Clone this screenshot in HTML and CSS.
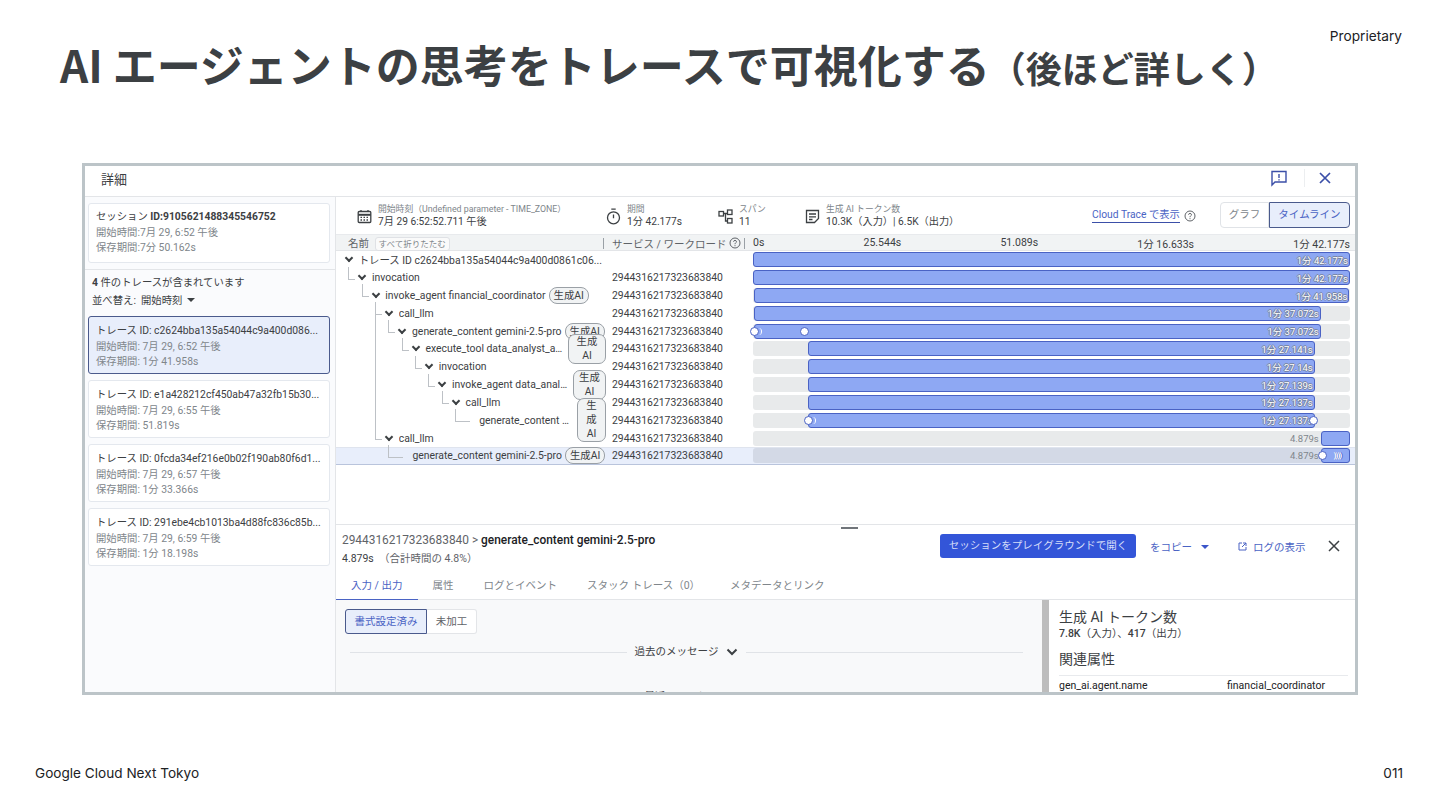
FILE: index.html
```html
<!DOCTYPE html>
<html lang="ja">
<head>
    <meta charset="UTF-8">
    <meta name="viewport" content="width=device-width, initial-scale=1">
    <title>AI エージェントの思考をトレースで可視化する</title>

    <link rel="stylesheet" href="styles.css">

</head>
<body>
    <div class="slide">
        <header class="slide-head">
            <h1>AI エージェントの思考をトレースで可視化する<small>（後ほど詳しく）</small></h1>
            <p class="tag">Proprietary</p>
        </header>

        <div class="frame">
            <div class="frame-head">
                <h2>詳細</h2>
                <svg width="18" height="18" viewBox="0 0 18 18" fill="none" stroke="#3b4fa8" stroke-width="1.4"><path d="M2 2.500h14v10.500H5L2 16z"/><path d="M9 5v4M9 10.200v1.300"/></svg>
                <span class="head-sep"></span>
                <svg width="14" height="14" viewBox="0 0 14 14" fill="none" stroke="#3b4fa8" stroke-width="1.700"><path d="M2 2l10 10M12 2L2 12"/></svg>
            </div>

            <div class="frame-body">
                <aside class="sidebar">
                    <div class="session-wrap">
                        <div class="card">
                            <p class="card-title">セッション <b>ID:9105621488345546752</b></p>
                            <p>開始時間:7月 29, 6:52 午後</p>
                            <p>保存期間:7分 50.162s</p>
                        </div>
                    </div>
                    <div class="trace-list">
                        <p class="count"><b>4</b> 件のトレースが含まれています</p>
                        <p class="sort">並べ替え:&nbsp; 開始時刻 <i class="caret"></i></p>
                        <div class="card selected">
                            <p class="card-title">トレース ID: c2624bba135a54044c9a400d086...</p>
                            <p>開始時間: 7月 29, 6:52 午後</p>
                            <p>保存期間: 1分 41.958s</p>
                        </div>
                        <div class="card">
                            <p class="card-title">トレース ID: e1a428212cf450ab47a32fb15b30...</p>
                            <p>開始時間: 7月 29, 6:55 午後</p>
                            <p>保存期間: 51.819s</p>
                        </div>
                        <div class="card">
                            <p class="card-title">トレース ID: 0fcda34ef216e0b02f190ab80f6d1...</p>
                            <p>開始時間: 7月 29, 6:57 午後</p>
                            <p>保存期間: 1分 33.366s</p>
                        </div>
                        <div class="card">
                            <p class="card-title">トレース ID: 291ebe4cb1013ba4d88fc836c85b...</p>
                            <p>開始時間: 7月 29, 6:59 午後</p>
                            <p>保存期間: 1分 18.198s</p>
                        </div>
                    </div>
                </aside>

                <main class="main">
                    <div class="summary">
                        <div class="stat stat-start">
                            <svg width="15" height="15" viewBox="0 0 15 15" fill="none" stroke="#3c4043" stroke-width="1.300"><rect x="1.200" y="2.500" width="12.600" height="11" rx="1"/><path d="M1.200 5.800h12.600" stroke-width="2"/><path d="M4 1v2M11 1v2"/><path d="M3.500 8.300h8M3.500 11h8" stroke-dasharray="1.500 1.500"/></svg>
                            <div><p class="stat-label">開始時刻（Undefined parameter - TIME_ZONE）</p><p class="stat-value">7月 29 6:52:52.711 午後</p></div>
                        </div>
                        <div class="stat stat-time">
                            <svg width="15" height="17" viewBox="0 0 15 17" fill="none" stroke="#3c4043" stroke-width="1.300"><circle cx="7.500" cy="9.800" r="6"/><path d="M5.300 1.200h4.400M7.500 6.500v3.800"/></svg>
                            <div><p class="stat-label">期間</p><p class="stat-value">1分 42.177s</p></div>
                        </div>
                        <div class="stat stat-span">
                            <svg width="15" height="15" viewBox="0 0 15 15" fill="none" stroke="#3c4043" stroke-width="1.300"><rect x="1" y="2.500" width="4.500" height="4.500"/><rect x="9.500" y="1" width="4.500" height="4.500"/><rect x="9.500" y="9.500" width="4.500" height="4.500"/><path d="M5.500 4.500h4M7.500 4.500v7.500h2"/></svg>
                            <div><p class="stat-label">スパン</p><p class="stat-value">11</p></div>
                        </div>
                        <div class="stat stat-token">
                            <svg width="15" height="15" viewBox="0 0 15 15" fill="none" stroke="#3c4043" stroke-width="1.300"><path d="M1.500 1.500h12v8l-4 4h-8z"/><path d="M4 5h7M4 7.800h7M4 10.500h3.500"/></svg>
                            <div><p class="stat-label">生成 AI トークン数</p><p class="stat-value">10.3K（入力）| 6.5K（出力）</p></div>
                        </div>
                        <a class="trace-link" href="#">Cloud Trace で表示</a>
                        <svg class="ic-help" width="12" height="12" viewBox="0 0 12 12" fill="none" stroke="#5f6368"><circle cx="6" cy="6" r="5"/><path d="M4.500 4.700C4.500 3 7.500 3 7.500 4.700 7.500 5.800 6 5.800 6 7.200M6 8.200v1"/></svg>
                        <div class="switch">
                            <span>グラフ</span>
                            <span class="on">タイムライン</span>
                        </div>
                    </div>

                    <div class="table-head">
                        <div class="th-name">名前 <span class="collapse-btn">すべて折りたたむ</span></div>
                        <div class="th-service">サービス / ワークロード
                            <svg width="12" height="12" viewBox="0 0 12 12" fill="none" stroke="#5f6368"><circle cx="6" cy="6" r="5"/><path d="M4.500 4.700C4.500 3 7.500 3 7.500 4.700 7.500 5.800 6 5.800 6 7.200M6 8.200v1"/></svg>
                        </div>
                        <div class="th-axis"><span>0s</span><span>25.544s</span><span>51.089s</span><span>1分 16.633s</span><span>1分 42.177s</span></div>
                    </div>

                    <div class="trace">
                        <div class="row" style="--d:0">
                            <div class="name root"><i class="chev"></i><span class="label">トレース ID c2624bba135a54044c9a400d0861c06...</span></div>
                            <div class="svc"></div>
                            <div class="track"><div class="bar" style="width:100%"><em>1分 42.177s</em></div></div>
                        </div>
                        <div class="row" style="--d:1">
                            <div class="name"><i class="chev"></i><span class="label">invocation</span></div>
                            <div class="svc">2944316217323683840</div>
                            <div class="track"><div class="bar" style="width:100%"><em>1分 42.177s</em></div></div>
                        </div>
                        <div class="row" style="--d:2">
                            <div class="name"><i class="chev"></i><span class="label grow-none">invoke_agent financial_coordinator</span><span class="badge">生成AI</span></div>
                            <div class="svc">2944316217323683840</div>
                            <div class="track"><div class="bar" style="margin-left:0.2%;width:99.700%"><em>1分 41.958s</em></div></div>
                        </div>
                        <div class="row" style="--d:3">
                            <div class="name"><i class="chev"></i><span class="label">call_llm</span></div>
                            <div class="svc">2944316217323683840</div>
                            <div class="track"><div class="bar" style="margin-left:0.2%;width:94.900%"><em>1分 37.072s</em></div></div>
                        </div>
                        <div class="row" style="--d:4">
                            <div class="name"><i class="chev"></i><span class="label grow-none">generate_content gemini-2.5-pro</span><span class="badge">生成AI</span></div>
                            <div class="svc">2944316217323683840</div>
                            <div class="track"><div class="bar" style="margin-left:0.2%;width:94.900%"><i class="dot wave" style="left:0"></i><i class="dot" style="left:8.900%"></i><em>1分 37.072s</em></div></div>
                        </div>
                        <div class="row" style="--d:5">
                            <div class="name"><i class="chev"></i><span class="label">execute_tool data_analyst_agent</span><span class="badge b2">生成AI</span></div>
                            <div class="svc">2944316217323683840</div>
                            <div class="track"><div class="bar" style="margin-left:9.200%;width:84.900%"><em>1分 27.141s</em></div></div>
                        </div>
                        <div class="row" style="--d:6">
                            <div class="name"><i class="chev"></i><span class="label">invocation</span></div>
                            <div class="svc">2944316217323683840</div>
                            <div class="track"><div class="bar" style="margin-left:9.200%;width:84.900%"><em>1分 27.14s</em></div></div>
                        </div>
                        <div class="row" style="--d:7">
                            <div class="name"><i class="chev"></i><span class="label">invoke_agent data_analyst_agent</span><span class="badge b3">生成AI</span></div>
                            <div class="svc">2944316217323683840</div>
                            <div class="track"><div class="bar" style="margin-left:9.200%;width:84.900%"><em>1分 27.139s</em></div></div>
                        </div>
                        <div class="row" style="--d:8">
                            <div class="name"><i class="chev"></i><span class="label">call_llm</span></div>
                            <div class="svc">2944316217323683840</div>
                            <div class="track"><div class="bar" style="margin-left:9.200%;width:84.900%"><em>1分 27.137s</em></div></div>
                        </div>
                        <div class="row" style="--d:9">
                            <div class="name leaf"><span class="label">generate_content gemini-2.5-pro</span><span class="badge b4">生成AI</span></div>
                            <div class="svc">2944316217323683840</div>
                            <div class="track"><div class="bar" style="margin-left:9.200%;width:84.900%"><i class="dot wave" style="left:0"></i><i class="dot" style="left:100%"></i><em>1分 27.137s</em></div></div>
                        </div>
                        <div class="row" style="--d:3">
                            <div class="name tall"><i class="chev"></i><span class="label">call_llm</span></div>
                            <div class="svc">2944316217323683840</div>
                            <div class="track short"><span class="out">4.879s</span><div class="bar" style="width:4.900%"></div></div>
                        </div>
                        <div class="row current" style="--d:4">
                            <div class="name leaf"><span class="label grow-none">generate_content gemini-2.5-pro</span><span class="badge">生成AI</span></div>
                            <div class="svc">2944316217323683840</div>
                            <div class="track short"><span class="out">4.879s</span><div class="bar" style="width:4.900%"><i class="dot" style="left:4%"></i><span class="arcs">))))</span></div></div>
                        </div>
                    </div>

                    <section class="detail">
                        <i class="handle"></i>
                        <div class="detail-head">
                            <div>
                                <p class="crumb">2944316217323683840 &gt; <b>generate_content gemini-2.5-pro</b></p>
                                <p class="dur">4.879s &nbsp;<span>（合計時間の 4.8%）</span></p>
                            </div>
                            <div class="actions">
                                <a class="primary" href="#">セッションをプレイグラウンドで開く</a>
                                <a class="copy" href="#">をコピー <i class="caret blue"></i></a>
                                <a class="logs" href="#"><svg width="9" height="9" viewBox="0 0 9 9" fill="none" stroke="#4a63c4"><path d="M4 1H1v7h7V5M5 1h3v3M8 1L4 5"/></svg> ログの表示</a>
                                <svg width="12" height="12" viewBox="0 0 12 12" fill="none" stroke="#3c4043" stroke-width="1.500"><path d="M1 1l10 10M11 1L1 11"/></svg>
                            </div>
                        </div>
                        <nav class="tabs">
                            <a class="active" href="#">入力 / 出力</a>
                            <a href="#">属性</a>
                            <a href="#">ログとイベント</a>
                            <a href="#">スタック トレース（0）</a>
                            <a href="#">メタデータとリンク</a>
                        </nav>
                        <div class="detail-body">
                            <div class="io">
                                <div class="io-switch"><span class="on">書式設定済み</span><span>未加工</span></div>
                                <div class="rule-title"><span>過去のメッセージ</span><svg width="12" height="8" viewBox="0 0 12 8" fill="none" stroke="#3c4043" stroke-width="2"><path d="M1.500 1.500L6 6l4.500-4.500"/></svg></div>
                                <p class="cut">最近のメッセージ</p>
                            </div>
                            <div class="attrs">
                                <h3>生成 AI トークン数</h3>
                                <p class="attr-tokens"><b>7.8K</b>（入力）、<b>417</b>（出力）</p>
                                <h3 class="attr-title">関連属性</h3>
                                <div class="attr-row"><span>gen_ai.agent.name</span><span>financial_coordinator</span></div>
                            </div>
                        </div>
                    </section>
                </main>
            </div>
        </div>

        <footer class="slide-foot">
            <p>Google Cloud Next Tokyo</p>
            <p>011</p>
        </footer>
    </div>
</body>
</html>
```

FILE: styles.css
```css
*{
    margin: 0;
    padding: 0;
    box-sizing: border-box;
}

body{
    font-family: "Roboto", "Noto Sans CJK JP", sans-serif;
    color: #3c4043;
    background-color: #fff;
    overflow: hidden;
}

a{
    text-decoration: none;
    color: inherit;
}

.slide{
    width: 1440px;
    height: 810px;
    display: flex;
    flex-direction: column;
}

/* slide title */

.slide-head{
    height: 163px;
    padding: 28px 38px 0 60px;
    display: flex;
    justify-content: space-between;
    align-items: flex-start;
}

.slide-head h1{
    font-family: "Noto Sans CJK JP", sans-serif;
    font-size: 44px;
    font-weight: 700;
    line-height: 76px;
    margin-top: -2px;
    color: #3c4043;
    white-space: nowrap;
}

.slide-head h1 small{
    font-size: 36px;
}

.tag{
    font-family: "Inter", sans-serif;
    font-size: 13.700px;
    line-height: 16px;
    color: #202124;
}

.slide-foot{
    flex: 1;
    padding: 70px 37px 0 35px;
    display: flex;
    justify-content: space-between;
    font-family: "Inter", sans-serif;
    font-size: 13.600px;
    line-height: 17px;
    color: #202124;
}

/* screenshot frame */

.frame{
    width: 1276px;
    height: 532px;
    margin-left: 82px;
    border: 3px solid #bcc4c8;
    display: flex;
    flex-direction: column;
    overflow: hidden;
    background-color: #fff;
}

.frame-head{
    height: 31px;
    flex-shrink: 0;
    padding: 0 23px 6px 16px;
    display: flex;
    align-items: center;
    border-bottom: 1px solid #e3e5e8;
}

.frame-head h2{
    font-size: 13px;
    font-weight: 400;
    flex: 1;
}

.head-sep{
    width: 1px;
    height: 18px;
    margin: 0 13px 0 16px;
    background-color: #eceef0;
}

.frame-body{
    flex: 1;
    min-height: 0;
    display: flex;
}

/* left list */

.sidebar{
    width: 251px;
    flex-shrink: 0;
    background-color: #fafbfd;
    border-right: 1px solid #e3e5e8;
    font-size: 10.350px;
}

.session-wrap{
    padding: 6px 5px 6px 3px;
    border-bottom: 1px solid #e3e5e8;
}

.trace-list{
    padding: 5px 5px 0 3px;
}

.count{
    padding-left: 4px;
    line-height: 16px;
    height: 18px;
}

.sort{
    padding-left: 4px;
    line-height: 16px;
    height: 23px;
}

.caret{
    display: inline-block;
    width: 0;
    height: 0;
    margin-left: 2px;
    vertical-align: 2px;
    border-left: 4px solid transparent;
    border-right: 4px solid transparent;
    border-top: 4px solid #3c4043;
}

.caret.blue{
    margin-left: 6px;
    border-top-color: #3b55c9;
}

.card{
    height: 58px;
    margin-bottom: 6px;
    padding: 6px 7px;
    background-color: #fff;
    border: 1px solid #e4e8ee;
    border-radius: 3px;
    color: #80868b;
    line-height: 15.500px;
    white-space: nowrap;
    overflow: hidden;
}

.session-wrap .card{
    height: 60px;
    margin-bottom: 0;
    padding-top: 5px;
}

.card-title{
    color: #3c4043;
}

.card.selected{
    background-color: #e8eefb;
    border-color: #4a5a8c;
}

/* summary row */

.summary{
    height: 37px;
    padding-right: 5px;
    display: flex;
    align-items: center;
}

.stat{
    display: flex;
    align-items: center;
    gap: 6px;
    margin-top: 2px;
}

.stat-start{
    width: 270px;
    padding-left: 21px;
}

.stat-time{
    width: 112px;
}

.stat-span{
    width: 87px;
}

.stat-token{
    width: 287px;
}

.stat-label{
    font-size: 8.800px;
    line-height: 11px;
    color: #80868b;
}

.stat-value{
    font-size: 10.200px;
    line-height: 14px;
}

.trace-link{
    font-size: 10.300px;
    line-height: 14px;
    color: #4a63c4;
    border-bottom: 1px solid #3b4fa8;
}

.ic-help{
    margin: 0 0 0 4px;
    flex-shrink: 0;
}

.switch{
    height: 26px;
    margin: -1px 0 0 auto;
    display: flex;
    font-size: 10.500px;
    line-height: 24px;
    color: #80868b;
}

.switch span{
    border: 1px solid #e0e3e7;
    border-radius: 4px 0 0 4px;
    width: 49px;
    text-align: center;
}

.switch .on{
    width: 81px;
    color: #4a63c4;
    background-color: #e8eefb;
    border-color: #4a5a8c;
    border-radius: 0 4px 4px 0;
}

/* trace table */

.table-head{
    height: 17px;
    padding-bottom: 2px;
    display: grid;
    grid-template-columns: 267px 142px 1fr;
    align-items: center;
    background-color: #f1f3f4;
    border-top: 1px solid #e8eaed;
    border-bottom: 1px solid #e3e5e8;
    font-size: 10.500px;
}

.th-name{
    padding-left: 12px;
    color: #5f6368;
}

.collapse-btn{
    margin-left: 3px;
    padding: 0 3px;
    font-size: 8.500px;
    line-height: 12px;
    display: inline-block;
    color: #80868b;
    background-color: #fafafa;
    border: 1px solid #dfe1e5;
    border-radius: 3px;
}

.th-service{
    display: flex;
    align-items: center;
    gap: 2px;
    height: 11px;
    padding-left: 8px;
    color: #5f6368;
    white-space: nowrap;
    border-left: 1px solid #9aa0a6;
    border-right: 1px solid #9aa0a6;
}

.th-axis{
    display: flex;
    justify-content: space-between;
    padding: 0 5px 0 8px;
    color: #3c4043;
}

.trace{
    flex: 1;
    min-height: 0;
    overflow: hidden;
}

.row{
    height: 17.820px;
    display: grid;
    grid-template-columns: 270px 147px 1fr;
    grid-template-rows: 17.820px;
    padding-right: 5px;
    align-items: center;
    font-size: 10.400px;
}

.row.current{
    background-color: #e8eefb;
    box-shadow: inset 0 -1px 0 #b9c4dc, inset 0 1px 0 #dfe4ee;
}

.name{
    position: relative;
    height: 100%;
    padding-left: calc(8px + var(--d) * 13.350px);
    display: flex;
    align-items: center;
    min-width: 0;
}

/* tree connector */
.name::before{
    content: "";
    position: absolute;
    left: calc(var(--d) * 13.350px - 1px);
    bottom: 7px;
    width: 6px;
    height: 12px;
    border-left: 1px solid #bdc1c6;
    border-bottom: 1px solid #bdc1c6;
}

.name.root::before{
    display: none;
}

.name.tall::before{
    height: 133px;
}

.name.leaf{
    padding-left: calc(23px + var(--d) * 13.350px);
}

.name.leaf::before{
    width: 14px;
}

.chev{
    flex-shrink: 0;
    width: 6px;
    height: 6px;
    margin: -3px 6.650px 0 2px;
    border-right: 2px solid #3c4043;
    border-bottom: 2px solid #3c4043;
    transform: rotate(45deg);
}

.label{
    flex: 1;
    min-width: 0;
    white-space: nowrap;
    overflow: hidden;
    text-overflow: ellipsis;
}

.label.grow-none{
    flex: none;
}

.badge{
    flex-shrink: 0;
    margin-left: 3px;
    padding: 0 4px;
    font-size: 10.400px;
    line-height: 15px;
    text-align: center;
    background-color: #f1f3f4;
    border: 1px solid #9aa0a6;
    border-radius: 8px;
    position: relative;
    z-index: 1;
}

.badge.b2{
    width: 38px;
    padding: 0 6px;
    line-height: 14px;
    border-radius: 7px;
}

.badge.b3{
    width: 33px;
    line-height: 14px;
    border-radius: 7px;
}

.badge.b4{
    width: 29px;
    padding: 0 8px;
    line-height: 14px;
    border-radius: 7px;
}

.svc{
    padding-left: 6px;
}

.track{
    height: 15px;
    display: flex;
    align-items: center;
    background-color: #e8eaeb;
    border-radius: 3px;
}

.track.short{
    justify-content: flex-end;
}

.row.current .track{
    background-color: #d3d9e6;
}

.out{
    padding-right: 2px;
    font-size: 9.500px;
    color: #80868b;
}

.bar{
    position: relative;
    height: 15px;
    padding-right: 1px;
    display: flex;
    align-items: center;
    justify-content: flex-end;
    background-color: #8ea8f3;
    border: 1px solid #4a62c4;
    border-radius: 3px;
}

.bar em{
    font-style: normal;
    font-size: 9.500px;
    color: #fff;
    white-space: nowrap;
    text-shadow: 1px 0 0 #78839c, -1px 0 0 #78839c, 0 1px 0 #78839c, 0 -1px 0 #78839c;
}

.dot{
    position: absolute;
    top: 2px;
    width: 9px;
    height: 9px;
    margin-left: -5px;
    background-color: #fff;
    border: 1px solid #4a62c4;
    border-radius: 50%;
}

.dot.wave::after{
    content: "";
    position: absolute;
    top: 0;
    left: 4px;
    width: 6px;
    height: 7px;
    border-right: 1px solid #fff;
    border-radius: 50%;
}

.arcs{
    font-size: 8px;
    font-weight: 700;
    color: #fff;
    padding-right: 7px;
    letter-spacing: -1px;
    text-shadow: 1px 0 0 #4a62c4;
}

/* span detail */

.main{
    flex: 1;
    min-width: 0;
    display: flex;
    flex-direction: column;
}

.detail{
    height: 168px;
    flex-shrink: 0;
    position: relative;
    border-top: 1px solid #e3e5e8;
    display: flex;
    flex-direction: column;
}

.handle{
    position: absolute;
    top: 2px;
    left: 505px;
    width: 17px;
    height: 2px;
    background-color: #70757a;
}

.detail-head{
    height: 50px;
    padding: 7px 15px 0 6px;
    display: flex;
    justify-content: space-between;
    align-items: flex-start;
}

.crumb{
    font-size: 11.900px;
    line-height: 17px;
    color: #5f6368;
}

.crumb b{
    font-weight: 500;
    color: #202124;
}

.dur{
    margin-top: 3px;
    font-size: 10.500px;
    line-height: 14px;
}

.dur span{
    color: #5f6368;
}

.actions{
    display: flex;
    align-items: center;
    font-size: 10.500px;
    color: #4a63c4;
    margin-top: 2px;
}

.actions svg{
    flex-shrink: 0;
}

.primary{
    height: 24px;
    width: 196px;
    line-height: 24px;
    text-align: center;
    color: #d5ddf8;
    background-color: #3355d8;
    border-radius: 3px;
    margin-right: 14px;
}

.copy{
    width: 88px;
}

.logs{
    width: 90px;
    display: flex;
    align-items: center;
    gap: 6px;
}

.tabs{
    height: 25px;
    flex-shrink: 0;
    display: flex;
    font-size: 10.500px;
    line-height: 22px;
    color: #80868b;
    border-bottom: 1px solid #e3e5e8;
}

.tabs a{
    padding: 0 15px;
    height: 25px;
}

.tabs a.active{
    color: #4a63c4;
    border-bottom: 1px solid #4a63c4;
}

.detail-body{
    flex: 1;
    min-height: 0;
    display: flex;
    overflow: hidden;
}

.io{
    flex: 1;
    min-width: 0;
    padding: 9px 19px 0 9px;
    background-color: #f8f9fa;
    border-right: 7px solid #bdbdbd;
}

.io-switch{
    display: flex;
    font-size: 10.500px;
    line-height: 23px;
}

.io-switch span{
    width: 50px;
    text-align: center;
    color: #5f6368;
    background-color: #fff;
    border: 1px solid #e3e5e8;
    border-left: 0;
    border-radius: 0 3px 3px 0;
}

.io-switch .on{
    width: 82px;
    color: #4a63c4;
    background-color: #e8eefb;
    border: 1px solid #4a5a8c;
    border-radius: 3px 0 0 3px;
}

.rule-title{
    margin: 10px 0 0 5px;
    display: flex;
    align-items: center;
    gap: 8px;
    font-size: 10.500px;
    line-height: 16px;
}

.rule-title::before,
.rule-title::after{
    content: "";
    flex: 1;
    height: 1px;
    margin-top: 1px;
    background-color: #e0e3e7;
}

.cut{
    margin-top: 28px;
    text-align: center;
    font-size: 10.500px;
    padding-left: 5px;
}

.attrs{
    width: 306px;
    flex-shrink: 0;
    padding: 8px 7px 0 10px;
}

.attrs h3{
    font-size: 14px;
    font-weight: 400;
    line-height: 18px;
    color: #3c4043;
}

.attr-tokens{
    margin-top: 1px;
    font-size: 10.500px;
    line-height: 14px;
}

.attr-tokens b{
    font-weight: 500;
}

.attr-title{
    margin-top: 9px;
    padding-bottom: 7px;
    border-bottom: 1px solid #e8eaed;
}

.attr-row{
    display: grid;
    grid-template-columns: 168px 1fr;
    padding-top: 3px;
    font-size: 10.500px;
    line-height: 14px;
    color: #202124;
}
```
